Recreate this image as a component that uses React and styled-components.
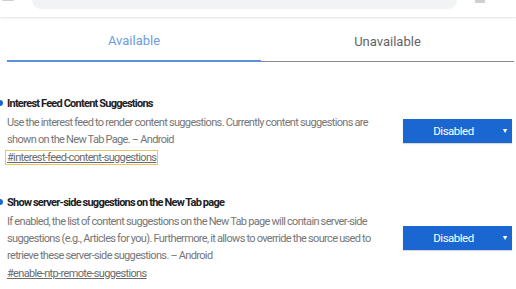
import React from 'react';
import styled, { createGlobalStyle } from 'styled-components';

const GlobalStyle = createGlobalStyle`
  html, body {
    margin: 0;
    padding: 0;
    background: #ffffff;
  }
  body {
    font-family: Roboto, "Liberation Sans", sans-serif;
    -webkit-font-smoothing: antialiased;
  }
`;

const Page = styled.div`
  width: 516px;
  height: 289px;
  overflow: hidden;
  background: #ffffff;
`;

const Header = styled.header`
  height: 17px;
  display: flex;
  align-items: flex-start;
  gap: 18px;
  padding: 0 31px 0 2px;
  box-shadow: 0 1px 2px rgba(0, 0, 0, 0.12);
  position: relative;
  z-index: 1;
`;

const HeaderIcon = styled.div`
  width: ${(p) => p.$width}px;
  height: ${(p) => p.$height}px;
  background: #cfcfcf;
  border-radius: 0 0 1px 1px;
`;

const SearchBox = styled.div`
  flex: 1;
  height: 9px;
  background: #f1f3f4;
  border-radius: 0 0 9px 9px;
`;

const Tabs = styled.nav`
  display: grid;
  grid-template-columns: 254px 1fr;
  margin: 0 2px 0 7px;
`;

const Tab = styled.div`
  height: 45px;
  display: flex;
  align-items: center;
  justify-content: center;
  padding-top: 4px;
  font-size: 13px;
  color: ${(p) => (p.$active ? '#6a9de0' : '#5f6368')};
  border-bottom: ${(p) => (p.$active ? '2px solid #5b90da' : '1px solid #8a8a8a')};
  box-sizing: border-box;
  align-self: end;
`;

const List = styled.section`
  display: flex;
  flex-direction: column;
  gap: 28px;
  padding: 33px 4px 0 7px;
`;

const Item = styled.div`
  display: flex;
  align-items: center;
  justify-content: space-between;
`;

const Body = styled.div`
  width: 378px;
  display: flex;
  flex-direction: column;
  font-size: 11px;
  letter-spacing: -0.65px;
  word-spacing: -0.3px;
`;

const Title = styled.div`
  position: relative;
  line-height: 17px;
  font-weight: bold;
  letter-spacing: -0.75px;
  color: #202124;

  &::before {
    content: '';
    position: absolute;
    left: -10px;
    top: 5px;
    width: 6px;
    height: 6px;
    border-radius: 50%;
    background: #1a67d2;
  }
`;

const Description = styled.p`
  margin: 2px 0 0;
  line-height: 17px;
  color: #767676;
`;

const LinkRow = styled.div`
  margin-top: 1px;
  height: 17px;
  display: flex;
  align-items: center;
`;

const Permalink = styled.a`
  line-height: 13px;
  color: #6b6b6b;
  text-decoration: underline;
  padding: 0 1px;
  margin-left: -1px;
  outline: ${(p) => (p.$focused ? '1px solid #e6c766' : 'none')};
`;

const Select = styled.div`
  width: 109px;
  height: 24px;
  box-sizing: border-box;
  background: #1a67d2;
  color: #ffffff;
  display: flex;
  align-items: center;
  justify-content: center;
  position: relative;
  font-size: 11.5px;
  letter-spacing: -0.5px;
  padding-right: 8px;
  box-shadow: 0 1px 1px rgba(0, 0, 0, 0.15);
`;

const Caret = styled.span`
  position: absolute;
  right: 4px;
  top: 8px;
  font-size: 7px;
`;

const flags = [
  {
    title: 'Interest Feed Content Suggestions',
    description:
      'Use the interest feed to render content suggestions. Currently content suggestions are shown on the New Tab Page. – Android',
    link: '#interest-feed-content-suggestions',
    focused: true,
  },
  {
    title: 'Show server-side suggestions on the New Tab page',
    description:
      'If enabled, the list of content suggestions on the New Tab page will contain server-side suggestions (e.g., Articles for you). Furthermore, it allows to override the source used to retrieve these server-side suggestions. – Android',
    link: '#enable-ntp-remote-suggestions',
  },
];

const App = () => (
  <Page>
    <GlobalStyle />
    <Header>
      <HeaderIcon $width={12} $height={1} />
      <SearchBox />
      <HeaderIcon $width={10} $height={3} />
    </Header>
    <Tabs>
      <Tab $active>Available</Tab>
      <Tab>Unavailable</Tab>
    </Tabs>
    <List>
      {flags.map((flag) => (
        <Item key={flag.link}>
          <Body>
            <Title>{flag.title}</Title>
            <Description>{flag.description}</Description>
            <LinkRow>
              <Permalink href={flag.link} $focused={flag.focused}>
                {flag.link}
              </Permalink>
            </LinkRow>
          </Body>
          <Select>
            Disabled
            <Caret>▼</Caret>
          </Select>
        </Item>
      ))}
    </List>
  </Page>
);

export default App;
